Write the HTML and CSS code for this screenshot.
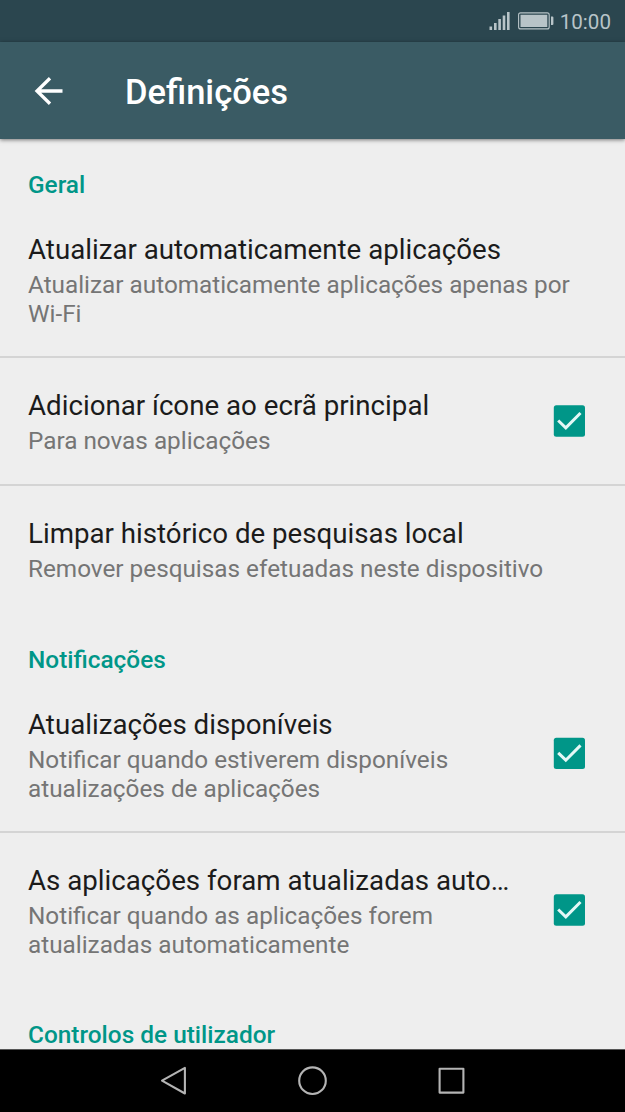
FILE: index.html
```html
<!DOCTYPE html>
<html lang="pt">
<head>
<meta charset="utf-8">
<title>Definições</title>
<link rel="stylesheet" href="styles.css">
</head>
<body>
<div class="phone">
  <div class="status">
    <svg class="signal" width="22" height="20" viewBox="0 0 22 20"><path d="M.5 15.500h2.600v3.500H.5zM5 12h2.600v7H5zM9.300 8h2.600v11H9.300zM13.700 4.500h2.600v14.500h-2.600zM18 1h2.600v18H18z"/></svg>
    <svg class="battery" width="36" height="18" viewBox="0 0 36 18"><rect x=".6" y=".9" width="30.600" height="16" rx="2" fill="none" stroke="currentColor" stroke-width="1.100"/><path d="M2.500 2.800h26.800v12.200H2.500zM33 4.500h1.400q1 0 1 1v6.500q0 1-1 1H33z"/></svg>
    <span class="clock">10:00</span>
  </div>
  <header class="bar">
    <svg class="back" width="30" height="30" viewBox="0 0 30 30"><path d="M28.500 15H3M16 2.300L3 15l13 12.700"/></svg>
    <h1>Definições</h1>
  </header>
  <main class="list">
    <h2 class="section first">Geral</h2>
    <section class="item three">
      <div class="text"><h3>Atualizar automaticamente aplicações</h3><p>Atualizar automaticamente aplicações apenas por<br>Wi-Fi</p></div>
    </section>
    <section class="item two ruled">
      <div class="text"><h3>Adicionar ícone ao ecrã principal</h3><p>Para novas aplicações</p></div>
      <svg class="check" width="32" height="32" viewBox="0 0 32 32"><rect x=".8" y=".2" width="31.200" height="31.600" rx="2.500"/><path d="M5.200 15.500l7.600 7.300L27.500 8"/></svg>
    </section>
    <section class="item two ruled">
      <div class="text"><h3>Limpar histórico de pesquisas local</h3><p>Remover pesquisas efetuadas neste dispositivo</p></div>
    </section>
    <h2 class="section">Notificações</h2>
    <section class="item three">
      <div class="text"><h3>Atualizações disponíveis</h3><p>Notificar quando estiverem disponíveis<br>atualizações de aplicações</p></div>
      <svg class="check" width="32" height="32" viewBox="0 0 32 32"><rect x=".8" y=".7" width="31.200" height="31.300" rx="2.500"/><path d="M5.200 15.900l7.600 7.300L27.500 8.400"/></svg>
    </section>
    <section class="item three ruled">
      <div class="text"><h3>As aplicações foram atualizadas auto…</h3><p>Notificar quando as aplicações forem<br>atualizadas automaticamente</p></div>
      <svg class="check" width="32" height="32" viewBox="0 0 32 32"><rect x=".8" y=".2" width="31.200" height="31.600" rx="2.500"/><path d="M5.200 15.500l7.600 7.300L27.500 8"/></svg>
    </section>
    <h2 class="section">Controlos de utilizador</h2>
  </main>
  <nav class="nav">
    <svg width="30" height="32" viewBox="0 0 30 32"><path d="M25.900 2.900v25.600L3 15.700z"/></svg>
    <svg width="30" height="32" viewBox="0 0 30 32"><circle cx="14.500" cy="15.700" r="13.300"/></svg>
    <svg width="30" height="32" viewBox="0 0 30 32"><path d="M2.600 3.800h23.800v23.800H2.600z"/></svg>
  </nav>
</div>
</body>
</html>
```
FILE: styles.css
```css
* { box-sizing: border-box; margin: 0; padding: 0; }
body { font-family: Roboto, sans-serif; background: #eee; }
svg { display: block; flex: none; }
.phone { width: 625px; height: 1112px; display: flex; flex-direction: column; overflow: hidden; }
.status { height: 42px; flex: none; background: #2b464f; color: #b8c4c8; display: flex; align-items: center; justify-content: flex-end; padding-right: 14px; }
.status svg { fill: currentColor; }
.signal { margin-right: 7px; }
.battery { margin-right: 6px; }
.clock { font-size: 20.6px; line-height: 40px; padding-top: 2px; }
.bar { height: 97px; flex: none; background: #3a5b64; display: flex; align-items: center; padding-left: 34px; box-shadow: 0 1px 4px rgba(0,0,0,.5); position: relative; }
.back { fill: none; stroke: #fff; stroke-width: 3.3; margin-right: 61px; }
h1 { color: #fff; font-size: 34.5px; font-weight: 500; line-height: 40px; padding-top: 2px; }
.list { flex: 1; min-height: 0; overflow: hidden; background: #eee; }
.section { color: #009688; font-size: 24.4px; font-weight: 500; line-height: 28px; padding: 34px 28px 0; height: 63px; }
.first { padding-top: 32px; height: 61px; }
.item { display: flex; align-items: center; padding-left: 28px; padding-right: 40px; }
.two { height: 128px; }
.three { height: 156px; }
.ruled { border-top: 2px solid #d4d4d4; }
.text { flex: 1; align-self: flex-start; padding-top: 33px; white-space: nowrap; }
.ruled .text { padding-top: 31px; }
h3 { font-size: 27.7px; font-weight: 400; line-height: 34px; margin-bottom: 4px; color: #1b1b1b; }
p { font-size: 24.3px; line-height: 28.5px; color: #757575; }
.check rect { fill: #009688; }
.check path { fill: none; stroke: #e4f8f6; stroke-width: 3; }
.nav { height: 63px; flex: none; background: #000; border-top: 1px solid #555; display: flex; align-items: center; justify-content: center; gap: 109px; }
.nav svg { fill: none; stroke: #b4b4b4; stroke-width: 2.1; stroke-linejoin: round; }
```
